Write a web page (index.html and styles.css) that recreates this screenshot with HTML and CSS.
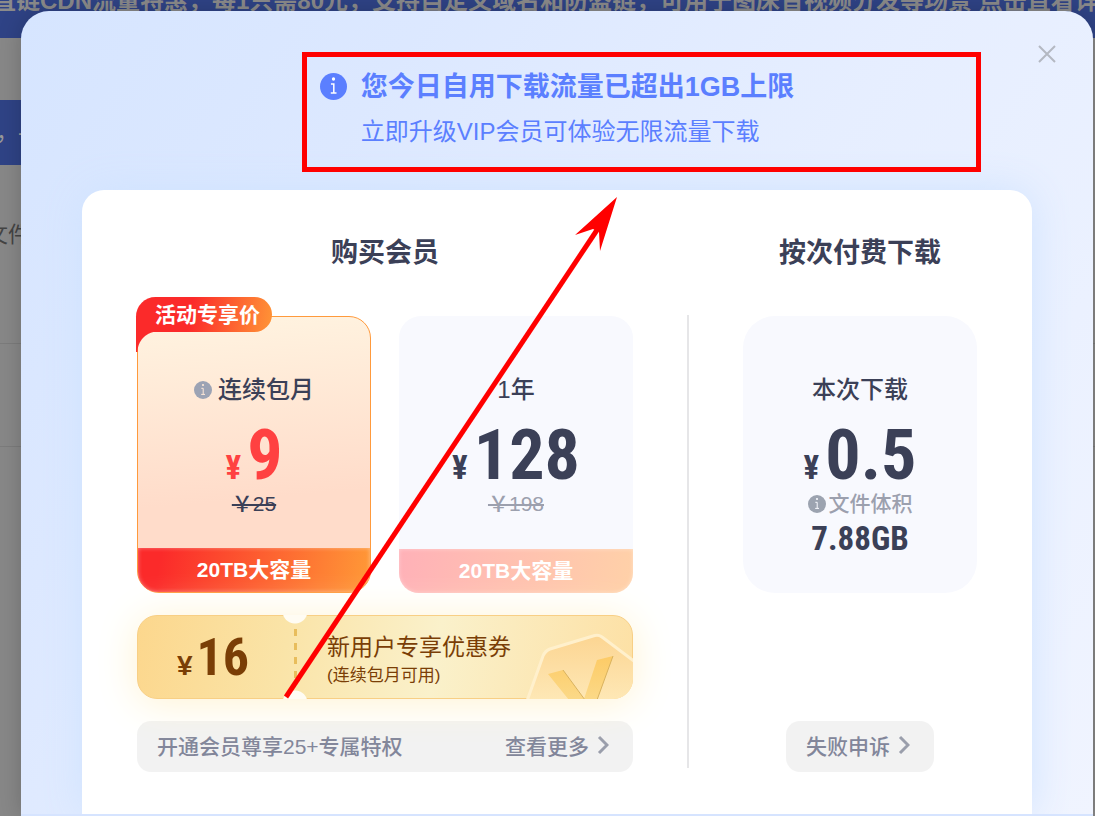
FILE: index.html
```
<!DOCTYPE html>
<html lang="zh-CN">

<head>
    <meta charset="UTF-8">
    <meta name="viewport" content="width=device-width, initial-scale=1.0">
    <title>升级VIP会员</title>
    <link rel="stylesheet" href="styles.css">
</head>

<body>
    <!-- Page behind the dialog -->
    <div class="page" aria-hidden="true">
        <div class="promo-bar">直链CDN流量特惠，每1只需80元，支持自定义域名和防盗链，可用于图床音视频分发等场景 点击直看详情</div>
        <div class="page-tab">，-</div>
        <div class="page-head">文件</div>
        <div class="page-row"></div>
    </div>

    <main class="modal">
        <button type="button" class="close-btn" aria-label="关闭">
            <svg width="20" height="20" viewBox="0 0 20 20"><path d="M2 2L18 18M18 2L2 18" stroke="#b4b8c2" stroke-width="2" fill="none" /></svg>
        </button>

        <header class="alert">
            <svg class="alert-icon" width="27" height="27" viewBox="0 0 18 18"><circle cx="9" cy="9" r="9" fill="#5b7fff" /><circle cx="9" cy="4" r="1.1" fill="#fff" /><path d="M7.3 7.3H9.2V13.2M7.2 13.4H11" stroke="#fff" stroke-width="1" fill="none" /></svg>
            <div>
                <h1>您今日自用下载流量已超出1GB上限</h1>
                <p>立即升级VIP会员可体验无限流量下载</p>
            </div>
        </header>

        <div class="panel">
            <section class="column">
                <h2>购买会员</h2>
                <div class="plans">
                    <button type="button" class="plan active">
                        <span class="badge">活动专享价</span>
                        <span class="plan-name">
                            <svg width="18" height="18" viewBox="0 0 18 18"><circle cx="9" cy="9" r="9" fill="#9ca3b4" /><circle cx="9" cy="4" r="1.1" fill="#ffe9d8" /><path d="M7.3 7.3H9.2V13.2M7.2 13.4H11" stroke="#ffe9d8" stroke-width="1" fill="none" /></svg>
                            连续包月
                        </span>
                        <span class="price"><small>¥</small>9</span>
                        <del>￥25</del>
                        <span class="capacity">20TB大容量</span>
                    </button>
                    <button type="button" class="plan">
                        <span class="plan-name">1年</span>
                        <span class="price"><small>¥</small>128</span>
                        <del>￥198</del>
                        <span class="capacity">20TB大容量</span>
                    </button>
                </div>

                <div class="coupon">
                    <svg class="coupon-logo" width="108" height="66" viewBox="0 0 108 66">
                        <defs>
                            <linearGradient id="gem" x1="0" y1="0" x2="0" y2="1">
                                <stop offset="0" stop-color="#fcd592" />
                                <stop offset="1" stop-color="#fee8b6" />
                            </linearGradient>
                            <linearGradient id="vee" x1="0" y1="0" x2="0" y2="1">
                                <stop offset="0" stop-color="#fdcb66" />
                                <stop offset="1" stop-color="#fbd988" />
                            </linearGradient>
                        </defs>
                        <path d="M2 68L18 23Q20 18 25 16L68 3Q73 1 77 4L110 29V68Z" fill="url(#gem)" stroke="#fff0cc" stroke-width="3" />
                        <path d="M23 41L38 37L59 66L72 27L88 23L72 67H44Z" fill="url(#vee)" />
                        <path d="M38 37L60 67M88 23L72 67" stroke="#d9b25e" stroke-width="1" fill="none" />
                    </svg>
                    <div class="coupon-price"><small>¥</small>16</div>
                    <div class="coupon-split"></div>
                    <div class="coupon-text">
                        <strong>新用户专享优惠券</strong>
                        <span>(连续包月可用)</span>
                    </div>
                </div>

                <a class="more" href="#more">
                    <span>开通会员尊享25+专属特权</span>
                    <span class="more-link">查看更多
                        <svg width="12" height="20" viewBox="0 0 12 20"><path d="M2 2L10 10L2 18" stroke="#9a9eab" stroke-width="3" fill="none" /></svg>
                    </span>
                </a>
            </section>

            <div class="divider"></div>

            <section class="column single">
                <h2>按次付费下载</h2>
                <button type="button" class="plan once">
                    <span class="plan-name">本次下载</span>
                    <span class="price"><small>¥</small>0.5</span>
                    <span class="size-label">
                        <svg width="18" height="18" viewBox="0 0 18 18"><circle cx="9" cy="9" r="9" fill="#9ca3b0" /><circle cx="9" cy="4" r="1.1" fill="#f8f9fe" /><path d="M7.3 7.3H9.2V13.2M7.2 13.4H11" stroke="#f8f9fe" stroke-width="1" fill="none" /></svg>
                        文件体积
                    </span>
                    <span class="size">7.88GB</span>
                </button>
                <a class="more appeal" href="#appeal">
                    <span class="more-link">失败申诉
                        <svg width="12" height="20" viewBox="0 0 12 20"><path d="M2 2L10 10L2 18" stroke="#9a9eab" stroke-width="3" fill="none" /></svg>
                    </span>
                </a>
            </section>
        </div>

        <!-- Red marker box and arrow over the dialog -->
        <svg class="marker" width="700" height="660" viewBox="0 0 700 660" aria-hidden="true">
            <rect x="4.5" y="4.5" width="674" height="115" fill="none" stroke="#f00" stroke-width="5" />
            <path d="M-14 647L297 180" fill="none" stroke="#f00" stroke-width="5" />
            <path d="M317 147L275 185L293 179L299 182L300 201Z" fill="#f00" />
        </svg>
    </main>
</body>

</html>
```
FILE: styles.css
```
* {
    box-sizing: border-box;
}

body {
    margin: 0;
    min-height: 100vh;
    display: flex;
    overflow: hidden;
    background: #888;
    color: #3b4057;
    font-family: "Liberation Sans", "Noto Sans CJK SC", sans-serif;
}

h1,
h2,
p {
    margin: 0;
}

button {
    font-family: inherit;
    color: inherit;
    border: none;
    padding: 0;
    cursor: pointer;
}

/* Dimmed page */
.page {
    position: absolute;
    inset: 0;
    overflow: hidden;
    color: #444;
}

.promo-bar {
    height: 38px;
    margin-bottom: 62px;
    text-indent: -8px;
    background: #2f4386;
    color: #8b8b8b;
    font-size: 24px;
    font-weight: bold;
    line-height: 2px;
    white-space: nowrap;
}

.page-tab {
    width: 80px;
    height: 65px;
    background: #2f4386;
    color: #999;
    font-size: 22px;
    line-height: 65px;
    text-indent: -4px;
}

.page-head {
    height: 179px;
    border-bottom: 1px solid #7c7c7c;
    font-size: 22px;
    line-height: 140px;
    text-indent: -14px;
}

.page-row {
    height: 103px;
    border-bottom: 1px solid #7c7c7c;
}

/* Dialog */
.modal {
    position: relative;
    flex: 1;
    display: flex;
    flex-direction: column;
    margin: 11px 2px 0 21px;
    padding-bottom: 3px;
    border-radius: 28px 28px 0 0;
    background: linear-gradient(#d6e4ff, #d6e4ff) bottom / 100% 3px no-repeat,
        linear-gradient(125deg, #d6e5ff 0%, #dce8ff 25%, #e6eeff 55%, #f0f4ff 100%);
    box-shadow: 0 0 24px rgba(0, 0, 0, 0.2);
}

.close-btn {
    position: absolute;
    top: 33px;
    right: 36px;
    width: 20px;
    height: 20px;
    background: none;
}

.close-btn svg {
    display: block;
}

.alert {
    display: flex;
    justify-content: center;
    gap: 14px;
    height: 179px;
    padding-top: 58px;
    color: #5b7fff;
}

.alert-icon {
    margin-top: 4px;
}

.alert h1 {
    font-size: 27px;
    line-height: 36px;
}

.alert p {
    margin-top: 10px;
    font-size: 24px;
    line-height: 34px;
}

.panel {
    flex: 1;
    display: grid;
    grid-template-columns: 1fr 2px 234px;
    gap: 54px;
    margin: 0 61px;
    padding: 42px 55px;
    border-radius: 22px 22px 0 0;
    background: #fff;
    box-shadow: 0 0 40px #cfe3ff;
    clip-path: inset(-50px -61px 0);
}

.column h2 {
    margin-bottom: 42px;
    font-size: 27px;
    line-height: 42px;
    text-align: center;
}

.divider {
    height: 453px;
    margin-top: 83px;
    background: #e6e6e8;
}

/* Plans */
.plans {
    display: grid;
    grid-template-columns: 1fr 1fr;
    gap: 28px;
}

.plan {
    position: relative;
    display: flex;
    flex-direction: column;
    align-items: center;
    width: 100%;
    height: 277px;
    padding-top: 56px;
    border-radius: 22px;
    background: #f8f9fe;
}

.plan-name {
    display: flex;
    align-items: center;
    gap: 6px;
    font-size: 24px;
    font-weight: 500;
    line-height: 36px;
}

.price {
    display: flex;
    align-items: baseline;
    gap: 6px;
    margin-top: 23px;
    font-family: "Liberation Sans Narrow", "Roboto Condensed", Roboto, sans-serif;
    font-size: 70px;
    font-weight: bold;
    line-height: 48px;
}

.price small {
    font-size: 33px;
}

.plan del {
    color: #9ca0ae;
    font-size: 21px;
    font-weight: 500;
    line-height: 24px;
}

.capacity {
    align-self: stretch;
    margin-top: auto;
    border-radius: 0 0 20px 20px;
    background: linear-gradient(100deg, #ffb1b8, #ffd1a8);
    box-shadow: inset 0 0 4px rgba(255, 255, 255, 0.4);
    color: #fff;
    font-size: 21px;
    font-weight: bold;
    line-height: 44px;
}

.plan.active {
    padding-top: 55px;
    border: 1px solid #ff9a3c;
    background: linear-gradient(175deg, #fff2df 5%, #ffdcca 65%);
}

.active .price {
    color: #ff4141;
}

.active del {
    color: #3b4057;
}

.active .capacity {
    background: linear-gradient(100deg, #fb2a2a 10%, #ff9a37);
}

.badge {
    position: absolute;
    top: -20px;
    left: -2px;
    height: 35px;
    padding: 0 12px 0 19px;
    border-radius: 20px 18px 18px 0;
    background: linear-gradient(100deg, #fb2a2a 40%, #ff9536);
    color: #fff;
    font-size: 21px;
    font-weight: bold;
    line-height: 35px;
}

/* Tail of the badge folding down the card edge */
.badge::after {
    content: "";
    position: absolute;
    top: 35px;
    left: 0;
    width: 22px;
    height: 20px;
    background: radial-gradient(circle at 22px 20px, transparent 20px, #fb2a2a 21px);
}

.plan.once {
    border-radius: 32px;
}

.size-label {
    display: flex;
    align-items: center;
    gap: 3px;
    color: #9ca0ae;
    font-size: 21px;
    font-weight: 500;
    line-height: 24px;
}

.size {
    margin-top: 3px;
    font-family: "Liberation Sans Narrow", "Roboto Condensed", Roboto, sans-serif;
    font-size: 33px;
    font-weight: bold;
    line-height: 40px;
}

/* Coupon */
.coupon {
    position: relative;
    display: flex;
    align-items: center;
    height: 84px;
    margin: 22px 0;
    border: 1px solid #f8cf85;
    border-radius: 20px;
    background: linear-gradient(100deg, #fcd78d, #fae4a8 30%, #faf1cb 60%, #fde0a4);
    box-shadow: 0 4px 40px #fff3d2;
    color: #7a3e06;
}

.coupon-logo {
    position: absolute;
    right: -1px;
    bottom: -1px;
    border-radius: 0 0 20px 0;
}

.coupon-price {
    display: flex;
    align-items: baseline;
    justify-content: center;
    gap: 4px;
    width: 150px;
    font-family: "Liberation Sans Narrow", "Roboto Condensed", Roboto, sans-serif;
    font-size: 52px;
    font-weight: bold;
}

.coupon-price small {
    font-family: "Liberation Sans", sans-serif;
    font-size: 28px;
}

.coupon-split {
    align-self: stretch;
    width: 24px;
    margin: -1px 20px -1px -5px;
    background: radial-gradient(circle at 50% -4px, #fffcf3 12px, transparent 13px),
        radial-gradient(circle at 50% 88px, #fffcf3 12px, transparent 13px),
        repeating-linear-gradient(#e8bd5c 0 7px, transparent 7px 14px) center / 3px 56px no-repeat;
}

.coupon-text {
    padding-top: 4px;
}

.coupon-text strong {
    display: block;
    font-size: 23px;
    font-weight: normal;
    line-height: 34px;
}

.coupon-text span {
    display: block;
    font-size: 17px;
    line-height: 24px;
}

.more {
    display: flex;
    justify-content: space-between;
    align-items: center;
    height: 51px;
    padding: 0 24px 3px 20px;
    border-radius: 14px;
    background: rgba(240, 240, 240, 0.85);
    color: #82869a;
    font-size: 21px;
    font-weight: 500;
    text-decoration: none;
}

.more-link {
    display: flex;
    align-items: center;
    gap: 8px;
}

.single {
    display: flex;
    flex-direction: column;
    align-items: center;
}

.appeal {
    margin-top: 128px;
}

.marker {
    position: absolute;
    top: 39px;
    left: 279px;
    overflow: visible;
    pointer-events: none;
}
```
